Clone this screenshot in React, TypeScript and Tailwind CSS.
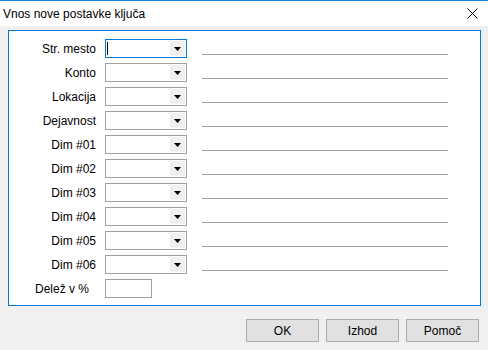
import React from "react";

const rows = [
  "Str. mesto",
  "Konto",
  "Lokacija",
  "Dejavnost",
  "Dim #01",
  "Dim #02",
  "Dim #03",
  "Dim #04",
  "Dim #05",
  "Dim #06",
];

function Arrow() {
  return (
    <svg width="7" height="4" viewBox="0 0 7 4" className="block">
      <polygon points="0,0 7,0 3.5,4" fill="#000" />
    </svg>
  );
}

function Combo({ focused }: { focused?: boolean }) {
  return (
    <div
      className={
        focused
          ? "relative flex h-[19px] w-[82px] items-stretch border border-[#0078d7] bg-white"
          : "relative flex h-[19px] w-[82px] items-stretch border border-[#a0a0a0] bg-white"
      }
    >
      <div className="flex-1">
        {focused && <div className="ml-[1px] mt-[2px] h-[13px] w-[1px] bg-black" />}
      </div>
      <div className="my-[1px] mr-[1px] flex w-[15px] items-center justify-center bg-[#f0f0f0]">
        <Arrow />
      </div>
    </div>
  );
}

export default function App() {
  return (
    <div
      className="flex h-[350px] w-[488px] flex-col bg-[#f0f0f0] text-[12px] text-black"
      style={{ fontFamily: '"Liberation Sans", Arial, sans-serif' }}
    >
      <div className="flex h-[26px] items-center justify-between border-t border-[#1883d7] bg-white pl-[3px] pr-[10px]">
        <span className="leading-none">Vnos nove postavke ključa</span>
        <svg width="11" height="11" viewBox="0 0 11 11" className="block">
          <path d="M0.5 0.5 L10.5 10.5 M10.5 0.5 L0.5 10.5" stroke="#000" strokeWidth="1" />
        </svg>
      </div>
      <div className="ml-[8px] mt-[4px] h-[276px] w-[473px] border border-[#0078d7] bg-white pt-[8px]">
        <div className="flex flex-col gap-[5px]">
          {rows.map((r, i) => (
            <div key={r} className="flex h-[19px] items-start">
              <div className="flex h-[19px] w-[87px] items-center justify-end leading-none">{r}</div>
              <div className="ml-[9px]">
                <Combo focused={i === 0} />
              </div>
              <div className="ml-[15px] mt-[15px] h-[1px] w-[246px] bg-[#a0a0a0]" />
            </div>
          ))}
          <div className="flex h-[19px] items-start">
            <div className="flex h-[19px] w-[87px] items-center justify-end pr-[7px] leading-none">Delež v %</div>
            <div className="ml-[9px] h-[19px] w-[47px] border border-[#a0a0a0] bg-white" />
          </div>
        </div>
      </div>
      <div className="mt-[13px] flex justify-end gap-[7px] pr-[9px]">
        {["OK", "Izhod", "Pomoč"].map((b) => (
          <div
            key={b}
            className="flex h-[23px] w-[73px] items-center justify-center border border-[#adadad] bg-[#e1e1e1] leading-none"
          >
            {b}
          </div>
        ))}
      </div>
    </div>
  );
}
